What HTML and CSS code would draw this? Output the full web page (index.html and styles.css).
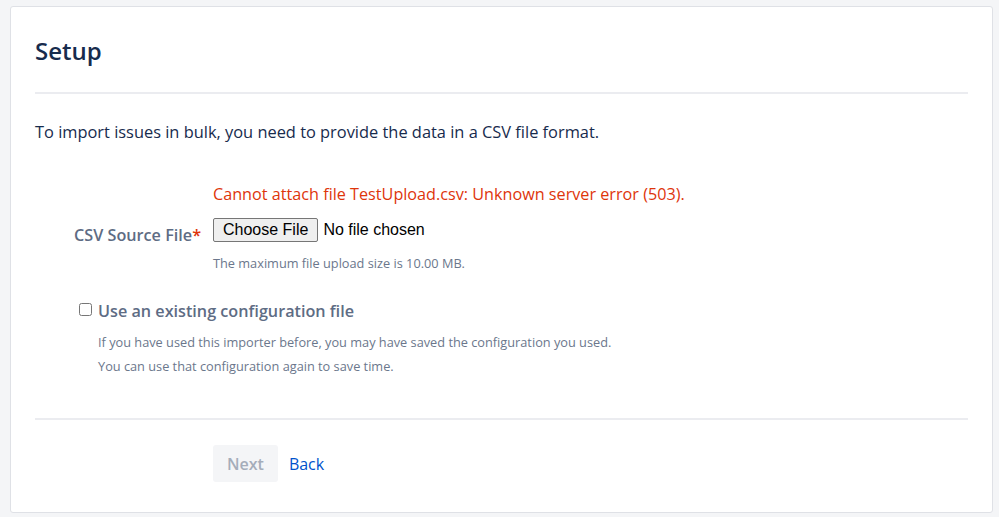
FILE: index.html
```html
<!DOCTYPE html>
<html lang="en">
<head>
<meta charset="utf-8">
<title>Setup</title>
<link rel="stylesheet" href="styles.css">
</head>
<body>
<main class="card">
  <header class="card-header">
    <h1 class="title">Setup</h1>
  </header>
  <form class="form">
    <p class="intro">To import issues in bulk, you need to provide the data in a CSV file format.</p>
    <div class="field-grid">
      <div class="error">Cannot attach file TestUpload.csv: Unknown server error (503).</div>
      <label class="field-label" for="csvFile">CSV Source File<span class="req">*</span></label>
      <div class="field">
        <input class="file-input" id="csvFile" type="file">
        <div class="desc desc-file">The maximum file upload size is 10.00 MB.</div>
      </div>
    </div>
    <div class="check-group">
      <label class="check-label"><input class="check" type="checkbox"><span class="check-text">Use an existing configuration file</span></label>
      <div class="desc desc-check">If you have used this importer before, you may have saved the configuration you used.<br>You can use that configuration again to save time.</div>
    </div>
    <div class="buttons">
      <button class="btn-next" type="button" disabled>Next</button>
      <a class="link-back" href="#">Back</a>
    </div>
  </form>
</main>
</body>
</html>
```
FILE: styles.css
```css
html, body {
  margin: 0;
  padding: 0;
}
body {
  background: #f4f5f7;
  font-family: "Open Sans", "Noto Sans", sans-serif;
  color: #172b4d;
  padding: 6px 6px 4px 10px;
  height: 517px;
  box-sizing: border-box;
}
.card {
  background: #fff;
  border: 1px solid #dfe1e6;
  border-radius: 3px;
  height: 100%;
  box-sizing: border-box;
  padding: 0 24px;
}
.card-header {
  height: 87px;
  border-bottom: 2px solid #ebecf0;
  box-sizing: border-box;
  padding-top: 29px;
}
.title {
  margin: 0;
  font-size: 24px;
  line-height: 30px;
  font-weight: 600;
  color: #172b4d;
}
.form {
  margin: 0;
}
.intro {
  margin: 0;
  padding-top: 26px;
  font-size: 16.4px;
  line-height: 24px;
}
.field-grid {
  display: grid;
  grid-template-columns: 178px 1fr;
  margin-top: 38px;
}
.error {
  grid-column: 2;
  color: #de350b;
  font-size: 16.2px;
  line-height: 24px;
}
.field-label {
  grid-column: 1;
  text-align: right;
  padding-right: 12px;
  font-weight: 600;
  font-size: 16.2px;
  color: #5e6c84;
  line-height: 24px;
  padding-top: 17px;
}
.req {
  color: #de350b;
}
.field {
  grid-column: 2;
  padding-top: 12px;
}
.file-input {
  font-family: "Liberation Sans", Arial, sans-serif;
  font-size: 16px;
  color: #000;
  height: 24px;
  margin: 0;
}
.file-input::file-selector-button {
  font-family: "Liberation Sans", Arial, sans-serif;
  font-size: 16px;
  height: 24px;
  padding: 0 9px;
  margin-right: 5px;
  background: #efefef;
  border: 1px solid #767676;
  border-radius: 2px;
  color: #000;
}
.desc {
  font-size: 12.75px;
  color: #6b778c;
  line-height: 24px;
}
.desc-file {
  margin-top: 9px;
}
.check-group {
  margin-top: 21px;
  padding-left: 44px;
}
.check-label {
  display: flex;
  align-items: center;
  gap: 6px;
  font-size: 16.2px;
  font-weight: 600;
  color: #5e6c84;
  line-height: 24px;
}
.check {
  margin: 0;
  width: 13px;
  height: 13px;
}
.check-text {
  padding-top: 3px;
}
.desc-check {
  padding-left: 19px;
  margin-top: 7px;
}
.buttons {
  margin-top: 40px;
  border-top: 2px solid #ebecf0;
  padding: 25px 0 0 178px;
  display: flex;
  align-items: center;
  gap: 11px;
}
.btn-next {
  font-family: "Open Sans", "Noto Sans", sans-serif;
  font-size: 16px;
  font-weight: 600;
  background: #f4f5f7;
  color: #a5adba;
  border: 0;
  border-radius: 3px;
  height: 37px;
  padding: 0 14px;
}
.link-back {
  color: #0052cc;
  text-decoration: none;
  font-size: 16px;
}
```
